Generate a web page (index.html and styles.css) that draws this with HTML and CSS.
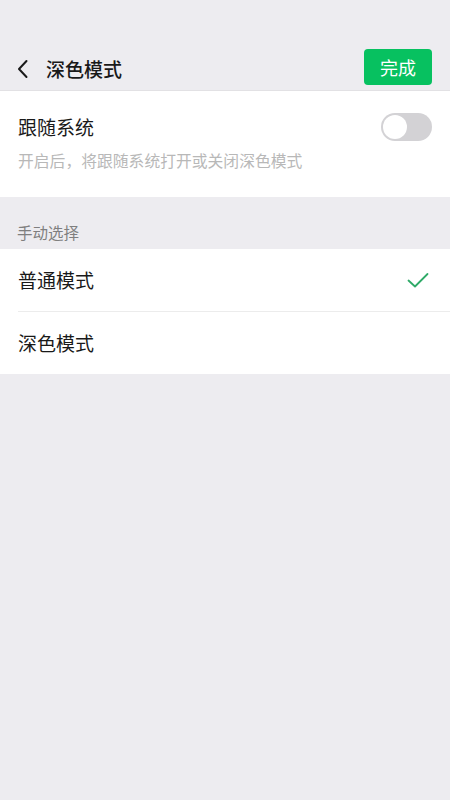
FILE: index.html
```html
<!DOCTYPE html>
<html>
<head>
    <meta charset="utf-8">
    <title>深色模式</title>
    <link rel="stylesheet" href="styles.css">
</head>
<body>
    <div class="navbar">
        <div class="nav-left">
            <svg class="back-icon" width="12" height="20" viewBox="0 0 12 20">
                <path d="M9.5 2 L2 10 L9.5 18" fill="none" stroke="#1a1a1a" stroke-width="2" stroke-linecap="round" stroke-linejoin="round"/>
            </svg>
            <span class="nav-title">深色模式</span>
        </div>
        <button class="done-button">完成</button>
    </div>

    <div class="card follow-card">
        <div class="follow-row">
            <span class="item-title">跟随系统</span>
            <div class="switch"><div class="switch-knob"></div></div>
        </div>
        <div class="item-desc">开启后，将跟随系统打开或关闭深色模式</div>
    </div>

    <div class="section-label">手动选择</div>

    <div class="card">
        <div class="option-row">
            <span class="item-title">普通模式</span>
            <svg class="check-icon" width="24" height="24" viewBox="0 0 24 24">
                <path d="M2.5 12.5 L9 18.5 L21.5 6" fill="none" stroke="#2faa68" stroke-width="1.8" stroke-linecap="round" stroke-linejoin="round"/>
            </svg>
        </div>
        <div class="divider"></div>
        <div class="option-row">
            <span class="item-title">深色模式</span>
        </div>
    </div>
</body>
</html>
```

FILE: styles.css
```css
body {
    margin: 0;
    background-color: #edecf0;
    font-family: "Noto Sans CJK SC", "Noto Sans", sans-serif;
    color: #191919;
}

/* Top navigation */
.navbar {
    height: 91px;
    box-sizing: border-box;
    padding: 44px 18px 0 17px;
    display: flex;
    align-items: center;
    justify-content: space-between;
    border-bottom: 1px solid #e2e1e4;
}

.nav-left {
    display: flex;
    align-items: center;
    gap: 17px;
    padding-top: 4px;
}

.back-icon {
    display: block;
}

.nav-title {
    font-size: 19px;
    font-weight: 500;
    line-height: 24px;
}

.done-button {
    width: 68px;
    height: 36px;
    border: none;
    border-radius: 4px;
    background-color: #07c160;
    color: white;
    font-family: inherit;
    font-size: 18px;
    padding: 0;
}

/* White groups */
.card {
    background-color: white;
}

.follow-card {
    padding: 24px 18px 25px 18px;
}

.follow-row {
    display: flex;
    align-items: center;
    justify-content: space-between;
    height: 24px;
}

.item-title {
    font-size: 19px;
    line-height: 24px;
}

.item-desc {
    margin-top: 11px;
    font-size: 15.8px;
    line-height: 22px;
    color: #b8b8b8;
}

/* Switch, off state */
.switch {
    width: 51px;
    height: 28px;
    border-radius: 14px;
    background-color: #d3d2d5;
    display: flex;
    align-items: center;
    padding: 0 2px;
    box-sizing: border-box;
}

.switch-knob {
    width: 24px;
    height: 24px;
    border-radius: 50%;
    background-color: white;
}

.section-label {
    padding: 24px 17px 6px 17px;
    font-size: 15.5px;
    line-height: 22px;
    color: #7f7f7f;
}

.option-row {
    height: 62px;
    padding: 0 20px 0 18px;
    display: flex;
    align-items: center;
    justify-content: space-between;
}

.divider {
    height: 1px;
    margin-left: 18px;
    background-color: #ececec;
}
```
